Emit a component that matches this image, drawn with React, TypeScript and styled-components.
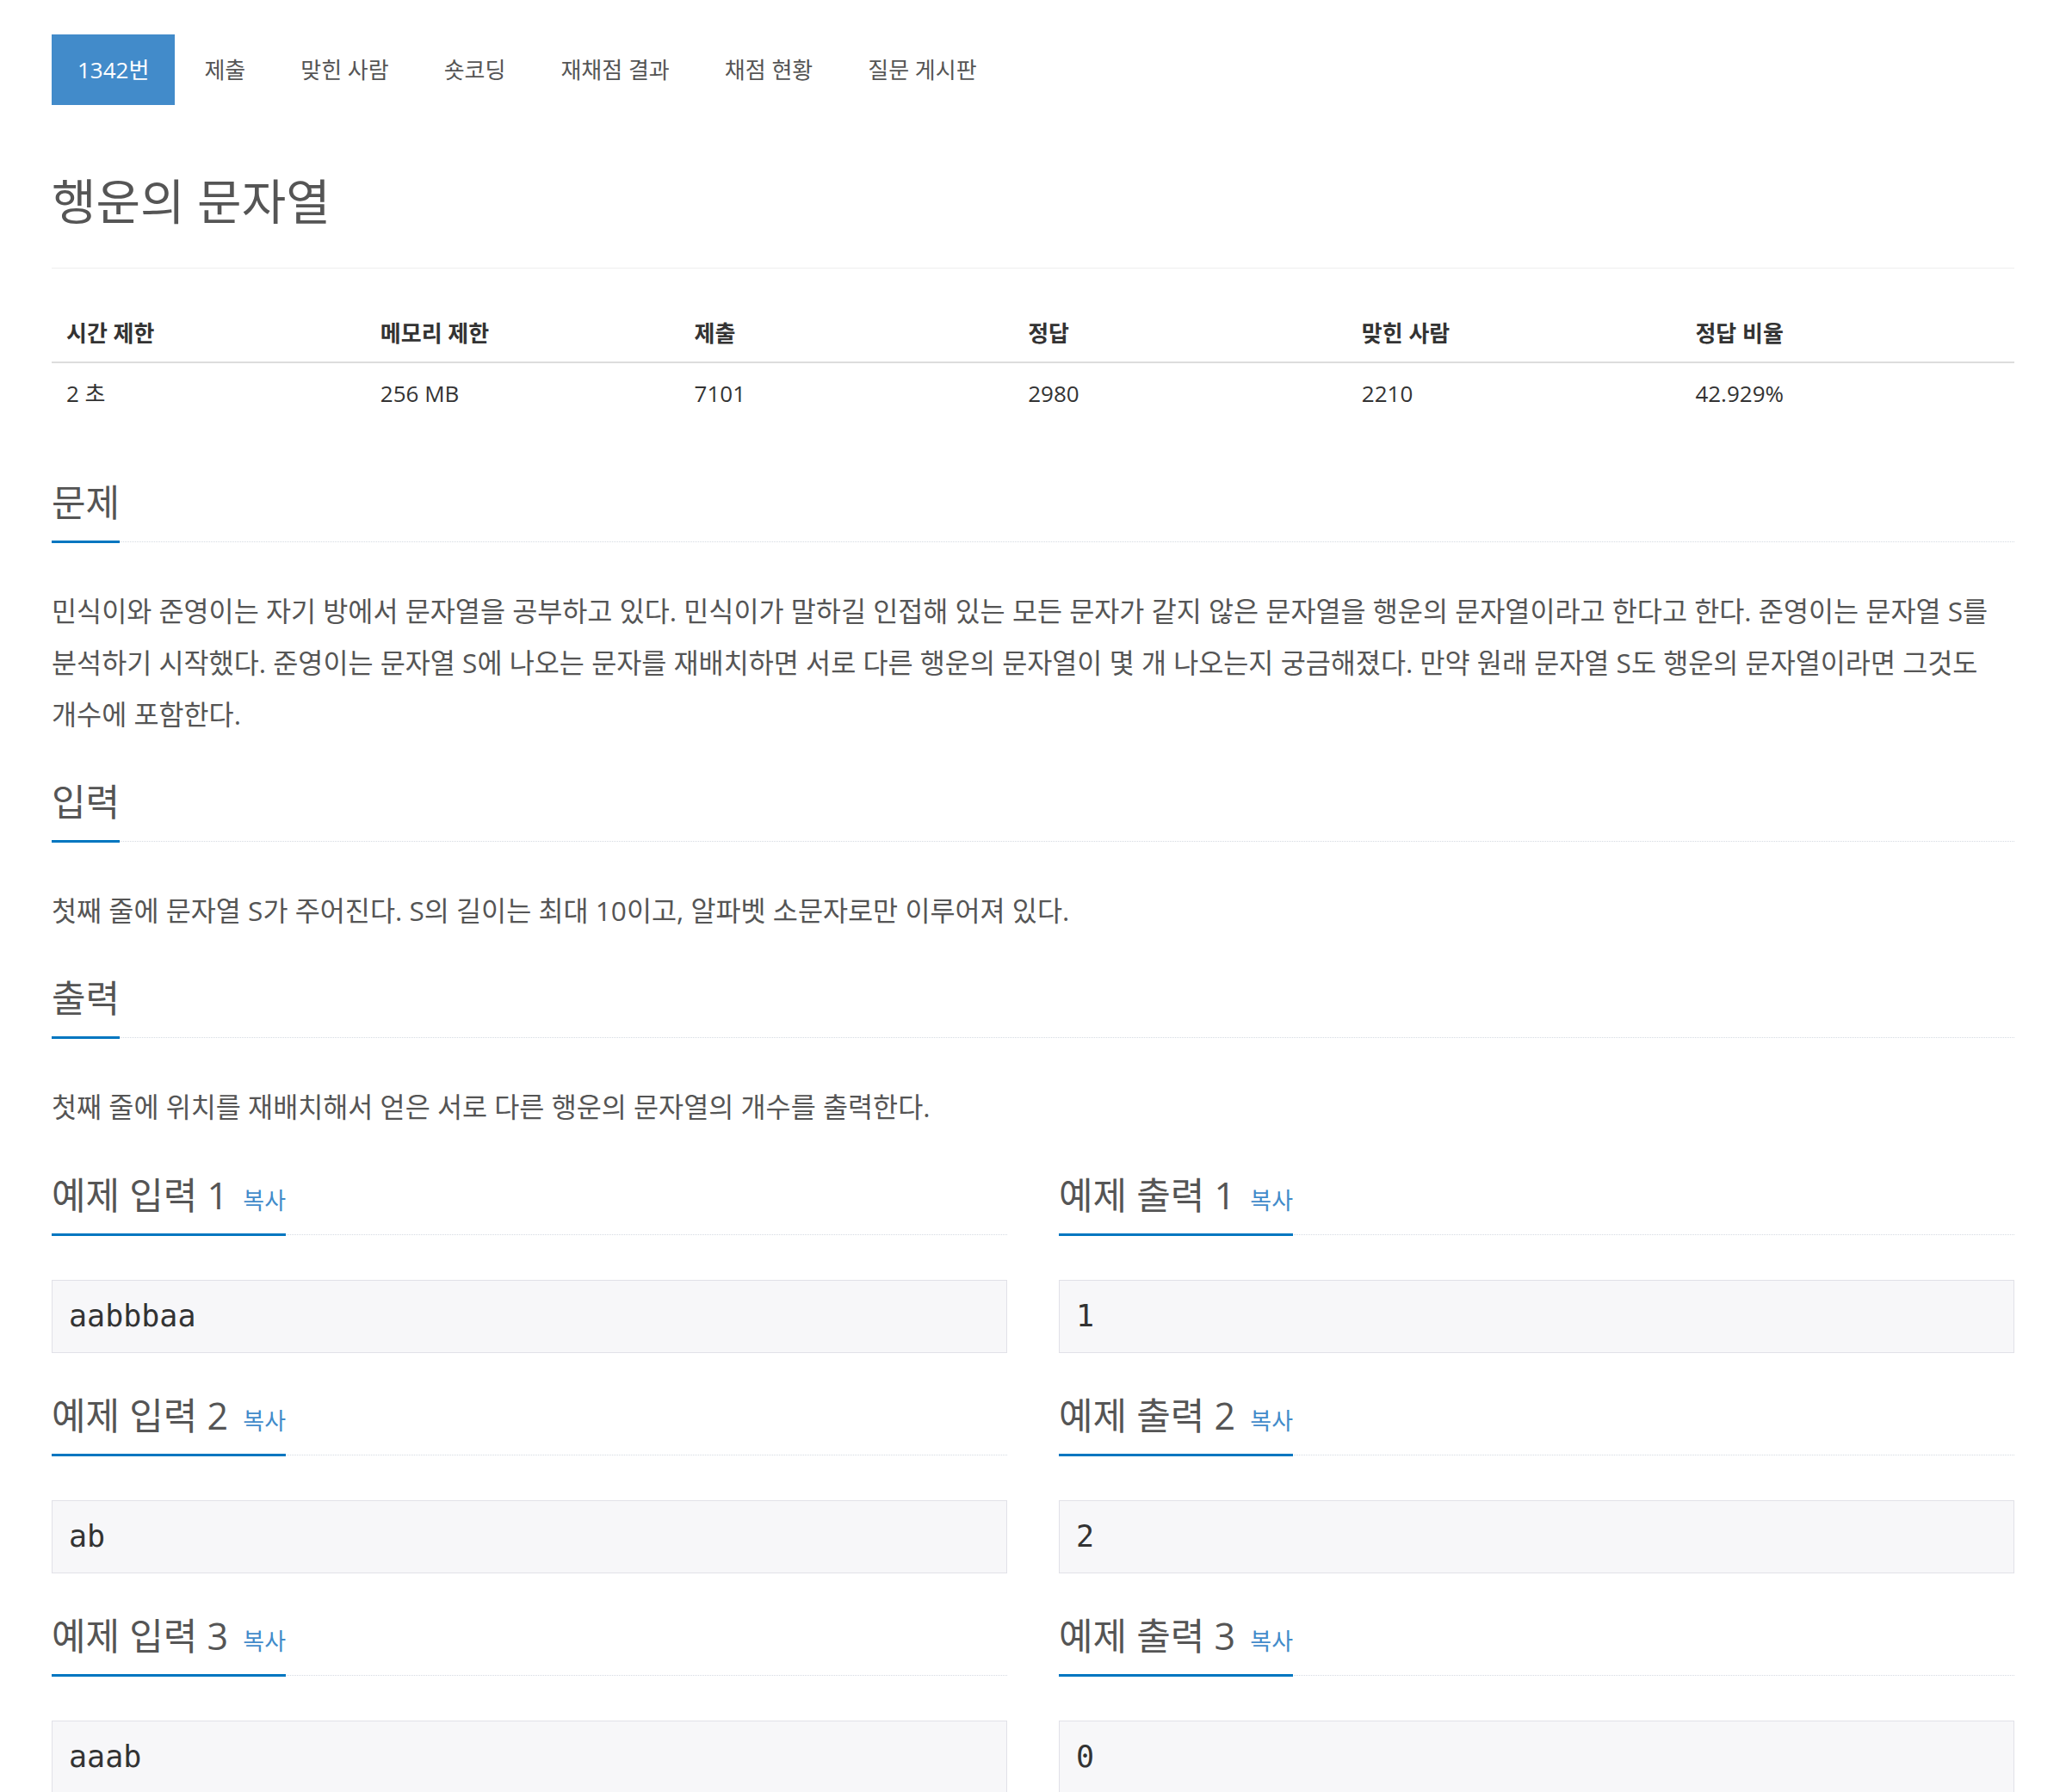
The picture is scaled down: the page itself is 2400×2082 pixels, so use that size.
import React from 'react';
import styled, { createGlobalStyle } from 'styled-components';

const GlobalStyle = createGlobalStyle`
  html, body { margin: 0; padding: 0; background: #ffffff; }
  body {
    font-family: "Open Sans", "Noto Sans CJK KR", sans-serif;
    color: #333333;
  }
  * { box-sizing: border-box; }
`;

const Page = styled.div`
  padding: 40px 60px 0;
`;

const Tabs = styled.ul`
  display: flex;
  gap: 4px;
  list-style: none;
  margin: 0;
  padding: 0;
`;

const Tab = styled.li<{ $active?: boolean }>`
  height: 82px;
  line-height: 82px;
  padding: 0 30px;
  font-size: 26px;
  background: ${(p) => (p.$active ? '#428bca' : 'transparent')};
  color: ${(p) => (p.$active ? '#ffffff' : '#555555')};
`;

const TitleBlock = styled.div`
  margin-top: 80px;
  padding-bottom: 47px;
  border-bottom: 1px solid #eeeeee;
`;

const Title = styled.h1`
  margin: 0;
  font-size: 56px;
  font-weight: 400;
  line-height: 62px;
  color: #555555;
`;

const InfoTable = styled.table`
  width: 100%;
  margin-top: 38px;
  border-collapse: collapse;
  table-layout: fixed;
`;

const Th = styled.th<{ $w: number }>`
  width: ${(p) => p.$w}%;
  text-align: left;
  font-weight: 700;
  font-size: 26px;
  line-height: 38px;
  padding: 18px 17px 14px;
  color: #333333;
  border-bottom: 2px solid #dddddd;
`;

const Td = styled.td`
  font-size: 26px;
  line-height: 38px;
  padding: 16px 17px;
  color: #333333;
`;

const Section = styled.section<{ $mt?: number }>`
  margin-top: ${(p) => p.$mt ?? 50}px;
`;

const Headline = styled.div`
  display: flex;
  border-bottom: 1px dotted #d5dae2;
`;

const H2 = styled.h2`
  margin: 0 0 -2px;
  padding-bottom: 22px;
  border-bottom: 3px solid #0076c0;
  font-size: 43px;
  font-weight: 400;
  line-height: 44px;
  color: #555555;
  white-space: nowrap;
`;

const CopyLink = styled.a`
  margin-left: 6px;
  font-size: 27px;
  line-height: 1;
  color: #428bca;
  text-decoration: none;
  cursor: pointer;
`;

const Text = styled.p`
  margin: 50px 0 0;
  font-size: 31.6px;
  line-height: 60px;
  color: #555555;
  word-break: keep-all;
`;

const SampleRow = styled.div`
  display: grid;
  grid-template-columns: 1fr 1fr;
  column-gap: 60px;
  margin-top: 51px;
`;

const SampleCol = styled.div`
  min-width: 0;
`;

const SamplePre = styled.pre`
  margin: 52px 0 0;
  padding: 16px 19px;
  font-family: "DejaVu Sans Mono", monospace;
  font-size: 35px;
  line-height: 51px;
  background: #f7f7f9;
  border: 1px solid #e1e1e8;
  color: #333333;
  white-space: pre;
`;

const tabs = ['1342번', '제출', '맞힌 사람', '숏코딩', '재채점 결과', '채점 현황', '질문 게시판'];

const headers: { label: string; w: number }[] = [
  { label: '시간 제한', w: 16 },
  { label: '메모리 제한', w: 16 },
  { label: '제출', w: 17 },
  { label: '정답', w: 17 },
  { label: '맞힌 사람', w: 17 },
  { label: '정답 비율', w: 17 },
];

const values = ['2 초', '256 MB', '7101', '2980', '2210', '42.929%'];

const samples = [
  { input: 'aabbbaa', output: '1' },
  { input: 'ab', output: '2' },
  { input: 'aaab', output: '0' },
];

const SampleBlock: React.FC<{ label: string; data: string }> = ({ label, data }) => (
  <SampleCol>
    <Headline>
      <H2>
        {label} <CopyLink>복사</CopyLink>
      </H2>
    </Headline>
    <SamplePre>{data}</SamplePre>
  </SampleCol>
);

const HeadSection: React.FC<{ title: string; mt?: number; children: React.ReactNode }> = ({
  title,
  mt,
  children,
}) => (
  <Section $mt={mt}>
    <Headline>
      <H2>{title}</H2>
    </Headline>
    {children}
  </Section>
);

export default function App() {
  return (
    <>
      <GlobalStyle />
      <Page>
        <Tabs>
          {tabs.map((t, i) => (
            <Tab key={t} $active={i === 0}>
              {t}
            </Tab>
          ))}
        </Tabs>

        <TitleBlock>
          <Title>행운의 문자열</Title>
        </TitleBlock>

        <InfoTable>
          <thead>
            <tr>
              {headers.map((h) => (
                <Th key={h.label} $w={h.w}>
                  {h.label}
                </Th>
              ))}
            </tr>
          </thead>
          <tbody>
            <tr>
              {values.map((v) => (
                <Td key={v}>{v}</Td>
              ))}
            </tr>
          </tbody>
        </InfoTable>

        <HeadSection title="문제" mt={70}>
          <Text>
            민식이와 준영이는 자기 방에서 문자열을 공부하고 있다. 민식이가 말하길 인접해 있는 모든 문자가 같지
            않은 문자열을 행운의 문자열이라고 한다고 한다. 준영이는 문자열 S를 분석하기 시작했다. 준영이는 문자열
            S에 나오는 문자를 재배치하면 서로 다른 행운의 문자열이 몇 개 나오는지 궁금해졌다. 만약 원래 문자열
            S도 행운의 문자열이라면 그것도 개수에 포함한다.
          </Text>
        </HeadSection>

        <HeadSection title="입력">
          <Text>첫째 줄에 문자열 S가 주어진다. S의 길이는 최대 10이고, 알파벳 소문자로만 이루어져 있다.</Text>
        </HeadSection>

        <HeadSection title="출력">
          <Text>첫째 줄에 위치를 재배치해서 얻은 서로 다른 행운의 문자열의 개수를 출력한다.</Text>
        </HeadSection>

        {samples.map((s, i) => (
          <SampleRow key={i}>
            <SampleBlock label={`예제 입력 ${i + 1}`} data={s.input} />
            <SampleBlock label={`예제 출력 ${i + 1}`} data={s.output} />
          </SampleRow>
        ))}
      </Page>
    </>
  );
}
